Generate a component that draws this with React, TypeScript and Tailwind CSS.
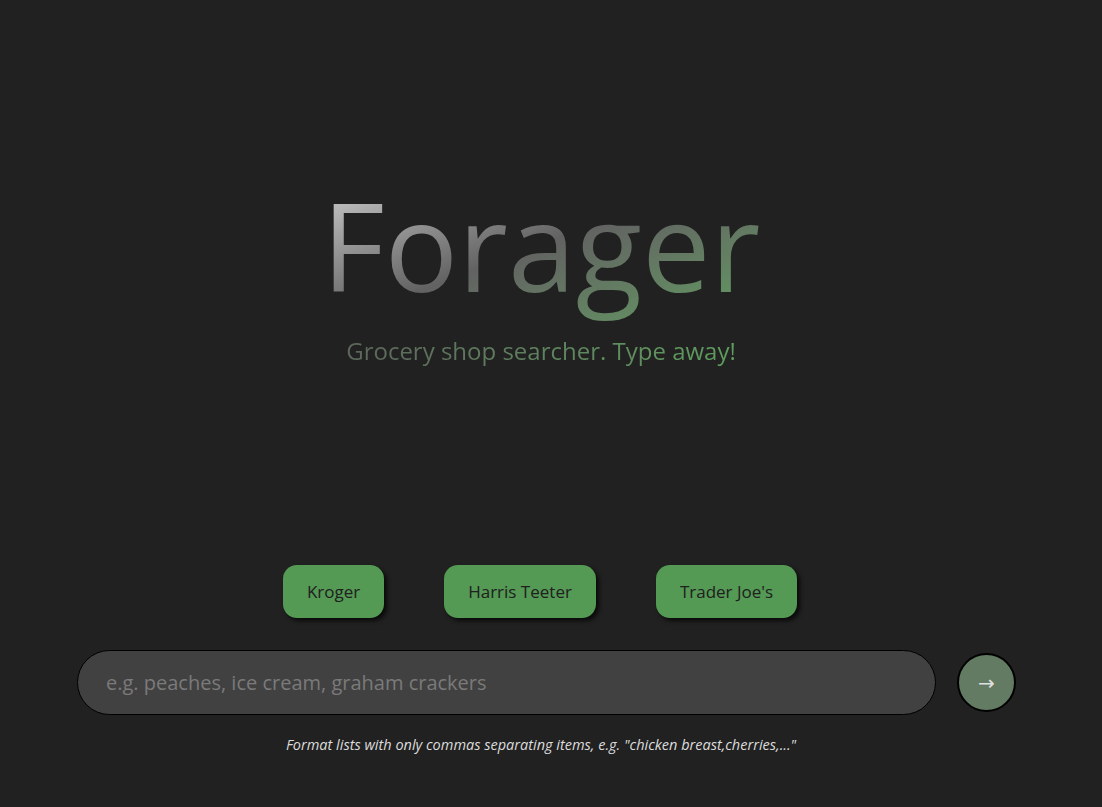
const font = "font-['Trebuchet_MS','Open_Sans','DejaVu_Sans',sans-serif]";

export default function App() {
  const stores = ["Kroger", "Harris Teeter", "Trader Joe's"];
  return (
    <div className={`min-h-[807px] w-full bg-[#212121] flex flex-col items-center ${font}`}>
      {/* Title */}
      <div className="flex flex-col items-center pt-[160px] pr-[20px]">
        <h1 className="text-[122px] leading-[170px] bg-gradient-to-br from-[#e2e2e2] via-[#626262] to-[#5fa05f] bg-clip-text text-transparent px-1">
          Forager
        </h1>
        <p className="mt-[6px] text-[24px] leading-[30px] bg-gradient-to-r from-[#5c665c] to-[#5e9e5e] bg-clip-text text-transparent">
          Grocery shop searcher. Type away!
        </p>
      </div>

      {/* Store buttons */}
      <div className="mt-[199px] flex items-center gap-[60px] pr-[22px]">
        {stores.map((s) => (
          <button
            key={s}
            className="h-[53px] px-[24px] rounded-[14px] bg-[#549954] text-[#202020] text-[17px] shadow-[3px_3px_4px_rgba(0,0,0,0.7)]"
          >
            {s}
          </button>
        ))}
      </div>

      {/* Search */}
      <div className="mt-[32px] w-full flex items-center pl-[77px] pr-[86px] gap-[21px]">
        <input
          type="text"
          placeholder="e.g. peaches, ice cream, graham crackers"
          className="flex-1 h-[65px] rounded-full bg-[#414141] border border-black pl-[28px] text-[20px] text-[#ddd] placeholder-[#7a7a7a] outline-none"
        />
        <button className="w-[59px] h-[59px] rounded-full bg-[#637a63] border-2 border-black text-[#e0e0e0] text-[20px] flex items-center justify-center">
          →
        </button>
      </div>

      <p className="mt-[19px] pr-[20px] text-[14.5px] italic text-[#dcdcdc]">
        Format lists with only commas separating items, e.g. "chicken breast,cherries,..."
      </p>
    </div>
  );
}
